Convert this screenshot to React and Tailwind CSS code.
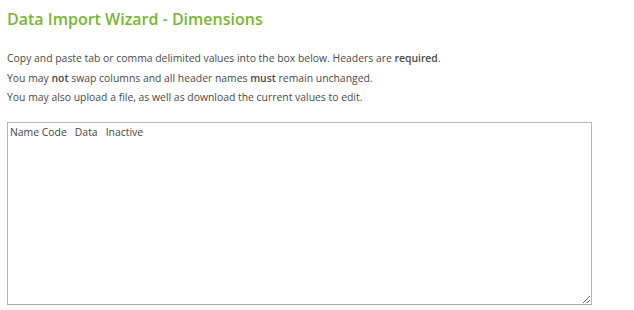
export default function App() {
  return (
    <div className="w-[634px] h-[310px] bg-white overflow-hidden px-[7px] pt-[8px]" style={{ fontFamily: '"Open Sans", sans-serif' }}>
      <h1 className="text-[16px] leading-[22px] font-semibold text-[#7ab532]">Data Import Wizard - Dimensions</h1>
      <div className="mt-[19px] text-[10.4px] leading-[19.5px] text-[#4a4a4a]">
        <p>Copy and paste tab or comma delimited values into the box below. Headers are <b className="font-semibold">required</b>.</p>
        <p>You may <b className="font-semibold">not</b> swap columns and all header names <b className="font-semibold">must</b> remain unchanged.</p>
        <p>You may also upload a file, as well as download the current values to edit.</p>
      </div>
      <textarea
        className="mt-[14px] block w-[585px] h-[183px] border border-[#b5b5b5] border-b-[#a8a8a8] px-[2px] py-[2px] text-[10.4px] leading-[14px] text-[#444] resize whitespace-pre"
        style={{ fontFamily: '"Open Sans", sans-serif' }}
        defaultValue={"Name Code   Data   Inactive"}
      />
    </div>
  );
}
